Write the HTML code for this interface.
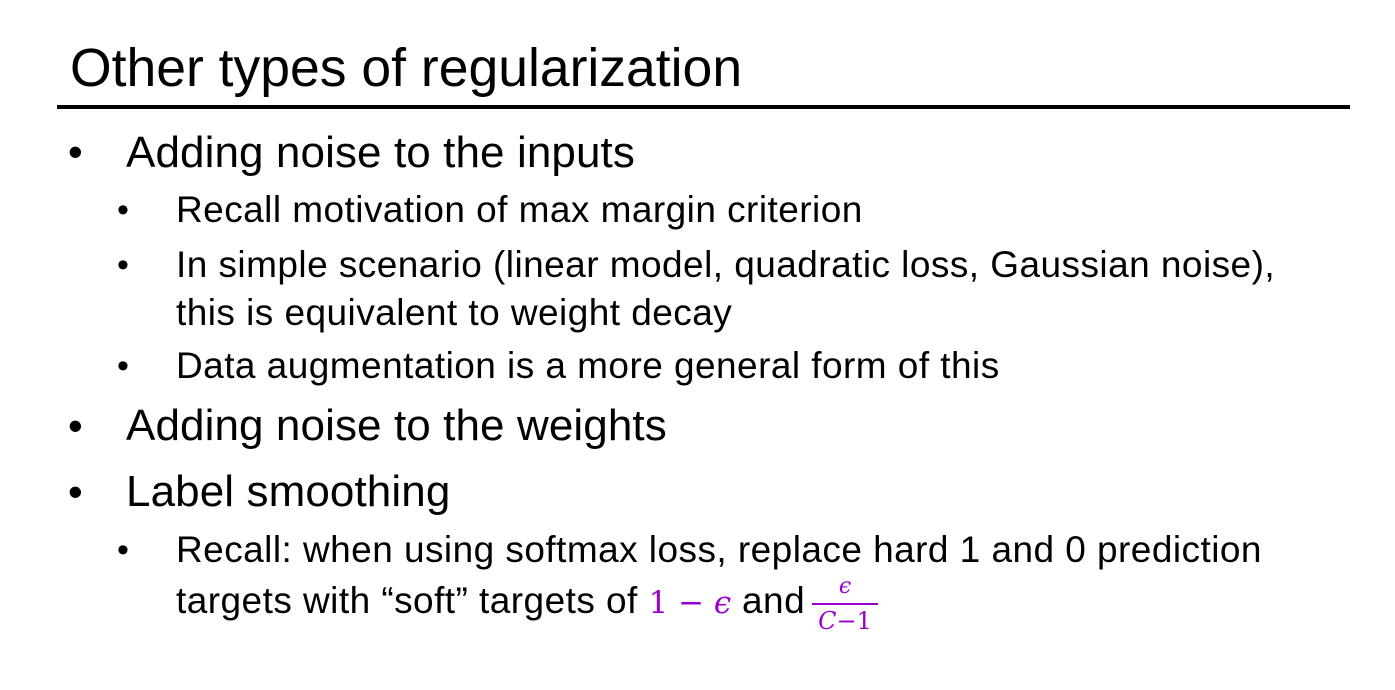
<!DOCTYPE html>
<html><head><meta charset="utf-8"><style>
body{margin:0;width:1395px;height:690px;background:#fff;position:relative;overflow:hidden;font-family:"Liberation Sans",Arial,sans-serif;color:#000}
.t{position:absolute;white-space:nowrap;line-height:1}
.h{font-size:53.5px;left:70px;top:42px}
.l1{font-size:44px;left:126px;letter-spacing:0.1px}
.l2{font-size:37px;left:176px;letter-spacing:0.45px}
.b1{font-size:42px;left:68px;position:absolute;line-height:1}
.b2{font-size:34px;left:117px;position:absolute;line-height:1}
.m{color:#9900cc;font-family:"DejaVu Serif","Liberation Serif",serif;letter-spacing:0}
.rule{position:absolute;left:57px;top:105px;width:1293px;height:4px;background:#000}
</style></head><body>
<div class="t h">Other types of regularization</div>
<div class="rule"></div>

<div class="b1" style="top:131px">•</div><div class="t l1" style="top:131px">Adding noise to the inputs</div>
<div class="b2" style="top:193px">•</div><div class="t l2" style="top:191px">Recall motivation of max margin criterion</div>
<div class="b2" style="top:248px">•</div><div class="t l2" style="top:246px">In simple scenario (linear model, quadratic loss, Gaussian noise),</div>
<div class="t l2" style="top:294px">this is equivalent to weight decay</div>
<div class="b2" style="top:349px">•</div><div class="t l2" style="top:347px">Data augmentation is a more general form of this</div>
<div class="b1" style="top:405px">•</div><div class="t l1" style="top:404px">Adding noise to the weights</div>
<div class="b1" style="top:471px">•</div><div class="t l1" style="top:470px">Label smoothing</div>
<div class="b2" style="top:533px">•</div><div class="t l2" style="top:531px">Recall: when using softmax loss, replace hard 1 and 0 prediction</div>
<div class="t l2" style="top:582px">targets with “soft” targets of <span class="m" style="font-size:31px">1 − <i>ϵ</i></span> and</div>
<div style="position:absolute;left:812px;top:575px;width:66px;text-align:center;color:#9900cc;font-family:'DejaVu Serif',serif">
<div style="font-size:22px;font-style:italic;line-height:24px">ϵ</div>
<div style="height:2px;background:#9900cc;margin:4px 0 3px"></div>
<div style="font-size:24px;line-height:26px"><i>C</i>−1</div>
</div>
</body></html>
